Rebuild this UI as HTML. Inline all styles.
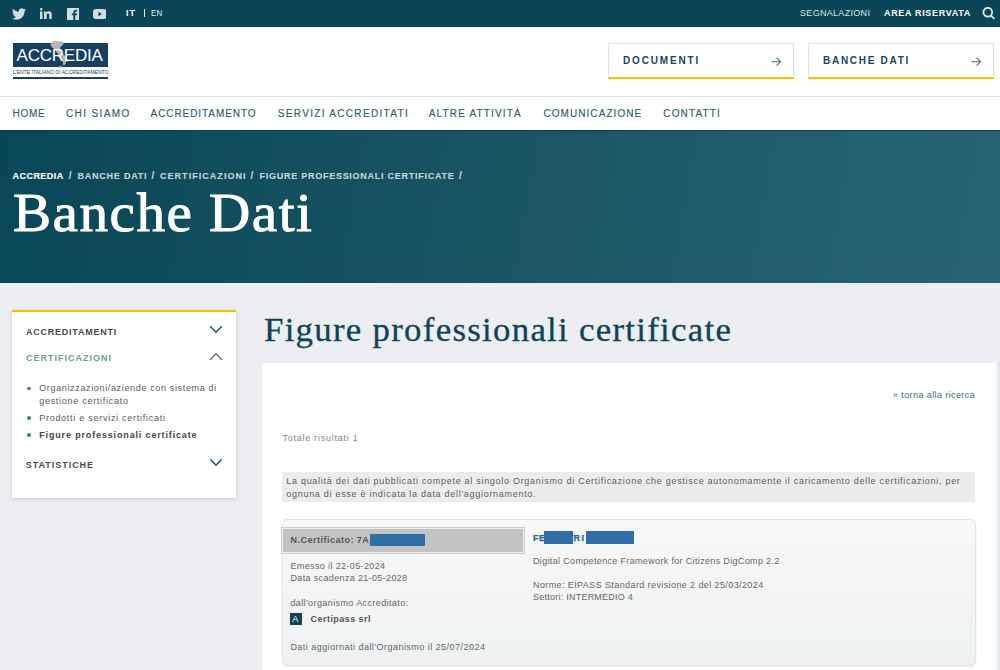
<!DOCTYPE html>
<html><head><meta charset="utf-8">
<style>
*{margin:0;padding:0;box-sizing:border-box}
html,body{width:1000px;height:670px;overflow:hidden;background:#eceef1;font-family:"Liberation Sans",sans-serif}
.a{position:absolute}
.t{position:absolute;white-space:nowrap;line-height:1}
#top{left:0;top:0;width:1000px;height:27px;background:#0a4657}
#hdr{left:0;top:27px;width:1000px;height:69px;background:#fff}
#sep{left:0;top:96px;width:1000px;height:1px;background:#dcdfe2}
#nav{left:0;top:97px;width:1000px;height:33px;background:#fff}
#hero{left:0;top:130px;width:1000px;height:153px;background:linear-gradient(100deg,#084757 0%,#124f5f 30%,#1c5665 55%,#236070 85%,#276372 100%);border-top:1px solid #083e4e}
.btn{position:absolute;top:43px;width:186px;height:36px;background:#fff;border:1px solid #e3e3e3;border-bottom:2px solid #f4c300;box-shadow:0 1px 2px rgba(0,0,0,.06)}
.bt{font-size:10px;font-weight:bold;color:#17475a;top:56px}
.nv{font-size:10px;color:#2f5d6d;top:109px;-webkit-text-stroke:0.15px #2f5d6d}
.bc{top:172px;font-size:9px;font-weight:bold;color:#c6d2d6;-webkit-text-stroke:0.15px currentColor}
.h1{left:13.4px;top:186px;font-family:"Liberation Serif",serif;font-size:54px;color:#fff;letter-spacing:1.36px;transform:scaleX(1.06);transform-origin:0 0;-webkit-text-stroke:0.9px #fff}
.h2{left:263.6px;top:312.5px;font-family:"Liberation Serif",serif;font-size:33.5px;color:#0f4456;letter-spacing:1.22px;transform:scaleX(1.04);transform-origin:0 0;-webkit-text-stroke:0.3px #0f4456}
#side{left:12px;top:310px;width:224px;height:188px;background:#fff;border-top:2px solid #f4c300;box-shadow:0 1px 4px rgba(0,0,0,.15)}
.sh{font-size:9px;font-weight:bold;color:#4a4a4a}
.li{font-size:9px;color:#5a5a5a}
.dot{position:absolute;left:27.3px;width:3.6px;height:3.6px;border-radius:50%;background:#4b7f80}
#main{left:262px;top:363px;width:733px;height:307px;background:#fff}
.g{font-size:9px;color:#666}
#notice{left:282px;top:472px;width:693px;height:30px;background:#ececec}
#card{left:281.5px;top:519px;width:694px;height:147px;border-radius:5px;background:linear-gradient(#f7f8f8,#eef1f2);border:1px solid #e2e4e5;box-shadow:0 1px 2px rgba(0,0,0,.08)}
#ncbox{left:282px;top:528px;width:241.5px;height:24.5px;background:#c3c3c3;border:1.5px solid #eeeeee;box-shadow:0 0 0 1px #cdcdcd}
.red{position:absolute;background:#2f6ea6}
</style></head><body>
<div id="top" class="a"></div>
<div id="hdr" class="a"></div>
<div id="sep" class="a"></div>
<div id="nav" class="a"></div>
<div id="hero" class="a"></div>

<!-- social icons -->
<svg class="a" style="left:12px;top:8px" width="14" height="12" viewBox="0 0 24 20"><path fill="#d3dde0" d="M24 2.4c-.9.4-1.8.6-2.8.8 1-.6 1.8-1.6 2.2-2.7-1 .6-2 1-3.1 1.2C19.3.6 18 0 16.6 0c-2.7 0-4.9 2.2-4.9 4.9 0 .4 0 .8.1 1.1C7.7 5.8 4.1 3.9 1.7.9c-.4.7-.7 1.6-.7 2.5 0 1.7.9 3.2 2.2 4.1-.8 0-1.6-.2-2.2-.6v.1c0 2.4 1.7 4.4 3.9 4.8-.4.1-.8.2-1.3.2-.3 0-.6 0-.9-.1.6 2 2.4 3.4 4.6 3.4-1.7 1.3-3.8 2.1-6.1 2.1-.4 0-.8 0-1.2-.1 2.2 1.4 4.8 2.2 7.5 2.2 9.1 0 14-7.5 14-14v-.6c1-.7 1.8-1.6 2.5-2.5z"/></svg>
<svg class="a" style="left:39.5px;top:8px" width="12" height="11" viewBox="0 0 24 22"><path fill="#d3dde0" d="M0 7h5v15H0zM2.5 0C4 0 5.1 1.1 5.1 2.6S4 5.2 2.5 5.2 0 4 0 2.6 1.1 0 2.5 0zM8 7h4.8v2.1c.7-1.2 2.3-2.5 4.7-2.5 5 0 6 3.3 6 7.6V22h-5v-7.2c0-1.7 0-3.9-2.4-3.9s-2.7 1.8-2.7 3.8V22H8z"/></svg>
<svg class="a" style="left:66.5px;top:7.5px" width="12" height="12" viewBox="0 0 24 24"><path fill="#d3dde0" d="M22.7 0H1.3C.6 0 0 .6 0 1.3v21.4c0 .7.6 1.3 1.3 1.3h11.5v-9.3H9.7v-3.6h3.1V8.4c0-3.1 1.9-4.8 4.7-4.8 1.3 0 2.5.1 2.8.1V7h-1.9c-1.5 0-1.8.7-1.8 1.8v2.3h3.6l-.5 3.6h-3.1V24h6.1c.7 0 1.3-.6 1.3-1.3V1.3C24 .6 23.4 0 22.7 0z"/></svg>
<svg class="a" style="left:92.8px;top:8.5px" width="13.5" height="10" viewBox="0 0 27 20"><path fill="#d3dde0" d="M26.4 3.1C26.1 1.9 25.2 1 24 .6 21.9 0 13.5 0 13.5 0S5.1 0 3 .6C1.8 1 .9 1.9.6 3.1 0 5.2 0 10 0 10s0 4.8.6 6.9c.3 1.2 1.2 2.1 2.4 2.5 2.1.6 10.5.6 10.5.6s8.4 0 10.5-.6c1.2-.4 2.1-1.3 2.4-2.5.6-2.1.6-6.9.6-6.9s0-4.8-.6-6.9zM10.8 14.3V5.7l7 4.3z"/></svg>

<!-- top bar text -->
<div class="t" style="left:126px;top:9px;font-size:9px;font-weight:bold;color:#fff;letter-spacing:1px">IT</div>
<div class="a" style="left:143.5px;top:9px;width:1.6px;height:8px;background:#e4ecee"></div>
<div class="t" style="left:150.5px;top:9px;font-size:9px;color:#e4ecee;letter-spacing:0.2px;transform:scaleX(0.88);transform-origin:0 0">EN</div>
<div class="t" style="left:800px;top:9px;font-size:9px;color:#d9e2e5;letter-spacing:0.31px">SEGNALAZIONI</div>
<div class="t" style="left:884px;top:9px;font-size:9px;font-weight:bold;color:#fff;letter-spacing:0.67px">AREA RISERVATA</div>
<svg class="a" style="left:982px;top:7px" width="14" height="14" viewBox="0 0 14 14"><circle cx="5.8" cy="5.2" r="4.4" fill="none" stroke="#e6eef0" stroke-width="1.7"/><line x1="9" y1="8.6" x2="12.4" y2="12" stroke="#e6eef0" stroke-width="1.7"/></svg>

<!-- logo -->
<div class="a" style="left:12.5px;top:43px;width:95.5px;height:23.5px;background:#173f62"></div>
<svg class="a" style="left:48px;top:38px" width="24" height="32" viewBox="0 0 24 32"><path fill="#b4b6b9" d="M2.5 7L4 4 7 2.8 10 3.5 13 3 15.7 4.5 15 7 12.5 9 12 11 14.5 15 17.5 19 20 22 19.5 24 18 23.5 17.5 26 15.5 28 15 25 14.5 22 11.5 18 8.5 14 6.5 11 4 9.5z"/><ellipse cx="12.5" cy="29" rx="1.8" ry="1.1" fill="#b4b6b9"/></svg>
<div class="t" style="left:16.5px;top:47px;font-size:17px;color:#fff;letter-spacing:-0.2px">ACCREDIA</div>
<div class="t" style="left:12.5px;top:69.5px;font-size:5.6px;color:#173f62;transform:scaleX(0.90);transform-origin:0 0">L'ENTE ITALIANO DI ACCREDITAMENTO</div>
<div class="a" style="left:12.5px;top:76.6px;width:95.5px;height:2.4px;background:#173f62"></div>

<!-- buttons -->
<div class="btn" style="left:608.4px"></div>
<div class="btn" style="left:808.4px"></div>
<div class="t bt" style="left:623px;letter-spacing:1.85px">DOCUMENTI</div>
<div class="t bt" style="left:823px;letter-spacing:1.72px">BANCHE DATI</div>
<svg class="a" style="left:771px;top:56.5px" width="11" height="10" viewBox="0 0 11 10"><path d="M0.5 4.8H9.5M5.6 0.9L9.5 4.8 5.6 8.7" fill="none" stroke="#4a6d7b" stroke-width="1.1"/></svg>
<svg class="a" style="left:971px;top:56.5px" width="11" height="10" viewBox="0 0 11 10"><path d="M0.5 4.8H9.5M5.6 0.9L9.5 4.8 5.6 8.7" fill="none" stroke="#4a6d7b" stroke-width="1.1"/></svg>

<!-- nav -->
<div class="t nv" style="left:12.5px;letter-spacing:0.72px">HOME</div>
<div class="t nv" style="left:66px;letter-spacing:1.38px">CHI SIAMO</div>
<div class="t nv" style="left:150.6px;letter-spacing:0.92px">ACCREDITAMENTO</div>
<div class="t nv" style="left:277.8px;letter-spacing:1.32px">SERVIZI ACCREDITATI</div>
<div class="t nv" style="left:428.7px;letter-spacing:1.17px">ALTRE ATTIVITÀ</div>
<div class="t nv" style="left:543.4px;letter-spacing:1.07px">COMUNICAZIONE</div>
<div class="t nv" style="left:663.3px;letter-spacing:1.15px">CONTATTI</div>

<!-- hero -->
<div class="t bc" style="left:12.5px;letter-spacing:0.46px;color:#fff">ACCREDIA</div><div class="t bc" style="left:68.8px;font-size:10px;top:171px">/</div><div class="t bc" style="left:77.5px;letter-spacing:0.77px">BANCHE DATI</div><div class="t bc" style="left:151.5px;font-size:10px;top:171px">/</div><div class="t bc" style="left:160px;letter-spacing:1.04px">CERTIFICAZIONI</div><div class="t bc" style="left:250.6px;font-size:10px;top:171px">/</div><div class="t bc" style="left:259.5px;letter-spacing:0.74px">FIGURE PROFESSIONALI CERTIFICATE</div><div class="t bc" style="left:459px;font-size:10px;top:171px">/</div>
<div class="t h1">Banche Dati</div>

<!-- sidebar -->
<div id="side" class="a"></div>
<div class="t sh" style="left:26px;top:327.5px;letter-spacing:0.76px">ACCREDITAMENTI</div>
<div class="t sh" style="left:26px;top:354px;letter-spacing:1px;color:#6c9c96">CERTIFICAZIONI</div>
<div class="t sh" style="left:25.8px;top:461px;letter-spacing:0.96px">STATISTICHE</div>
<svg class="a" style="left:209px;top:325px" width="14" height="9" viewBox="0 0 14 9"><path d="M1.2 1.2L7 7.2 12.8 1.2" fill="none" stroke="#1d5466" stroke-width="1.45"/></svg>
<svg class="a" style="left:209px;top:351.5px" width="14" height="9" viewBox="0 0 14 9"><path d="M1.2 7.8L7 1.8 12.8 7.8" fill="none" stroke="#6a6a6a" stroke-width="1.45"/></svg>
<svg class="a" style="left:209px;top:458px" width="14" height="9" viewBox="0 0 14 9"><path d="M1.2 1.2L7 7.2 12.8 1.2" fill="none" stroke="#1d5466" stroke-width="1.45"/></svg>
<div class="dot" style="top:386.7px"></div>
<div class="dot" style="top:416.3px"></div>
<div class="dot" style="top:433.3px"></div>
<div class="t li" style="left:39.2px;top:384px;letter-spacing:0.65px">Organizzazioni/aziende con sistema di</div>
<div class="t li" style="left:39.2px;top:396.8px;letter-spacing:0.72px">gestione certificato</div>
<div class="t li" style="left:39.2px;top:414px;letter-spacing:0.73px">Prodotti e servizi certificati</div>
<div class="t li" style="left:39.2px;top:430.7px;letter-spacing:0.85px;font-weight:bold;color:#444">Figure professionali certificate</div>

<!-- main -->
<div class="t h2">Figure professionali certificate</div>
<div id="main" class="a"></div>
<div class="a" style="left:995px;top:362px;width:3px;height:308px;background:#f2f4f5"></div>
<div class="a" style="left:998px;top:362px;width:2px;height:308px;background:#e3e6e8"></div>
<div class="t g" style="left:893px;top:390.7px;letter-spacing:0.4px;color:#3a6c79">« torna alla ricerca</div>
<div class="t g" style="left:282.4px;top:433.7px;letter-spacing:0.75px;color:#888">Totale risultati 1</div>
<div id="notice" class="a"></div>
<div class="t g" style="left:286.3px;top:476.75px;letter-spacing:0.71px;color:#5c5c5c">La qualità dei dati pubblicati compete al singolo Organismo di Certificazione che gestisce autonomamente il caricamento delle certificazioni, per</div>
<div class="t g" style="left:286.3px;top:489.75px;letter-spacing:0.71px;color:#5c5c5c">ognuna di esse è indicata la data dell'aggiornamento.</div>

<div id="card" class="a"></div>
<div id="ncbox" class="a"></div>
<div class="t g" style="left:290.5px;top:536px;letter-spacing:0.49px;font-weight:bold;color:#555">N.Certificato: 7A</div>
<div class="red" style="left:370px;top:534px;width:54.6px;height:11.7px"></div>
<div class="t g" style="left:290.5px;top:562.4px;letter-spacing:0.37px">Emesso il 22-05-2024</div>
<div class="t g" style="left:290.5px;top:574.4px;letter-spacing:0.35px">Data scadenza 21-05-2028</div>
<div class="t g" style="left:290.4px;top:598.6px;letter-spacing:0.4px">dall'organismo Accreditato:</div>
<div class="a" style="left:290px;top:613px;width:12px;height:12px;background:#0e4456"></div>
<div class="t" style="left:292.3px;top:615px;font-size:9px;color:#fff">A</div>
<div class="t g" style="left:310.6px;top:614.6px;letter-spacing:0.45px;font-weight:bold;color:#555">Certipass srl</div>
<div class="t g" style="left:290.4px;top:643px;letter-spacing:0.47px">Dati aggiornati dall'Organismo il 25/07/2024</div>

<div class="t g" style="left:533px;top:534px;font-weight:bold;color:#2b6399;letter-spacing:0.6px;-webkit-text-stroke:0.25px #2b6399">FE</div>
<div class="red" style="left:543.8px;top:531.3px;width:29.2px;height:12.5px"></div>
<div class="t g" style="left:573.6px;top:534px;font-weight:bold;color:#2b6399;letter-spacing:1.3px;-webkit-text-stroke:0.25px #2b6399">RI</div>
<div class="red" style="left:586.3px;top:531.3px;width:47.4px;height:12.5px"></div>
<div class="t g" style="left:533px;top:556.8px;letter-spacing:0.34px">Digital Competence Framework for Citizens DigComp 2.2</div>
<div class="t g" style="left:533px;top:580.8px;letter-spacing:0.4px">Norme: EIPASS Standard revisione 2 del 25/03/2024</div>
<div class="t g" style="left:533px;top:592.8px;letter-spacing:0.24px">Settori: INTERMEDIO 4</div>

</body></html>
